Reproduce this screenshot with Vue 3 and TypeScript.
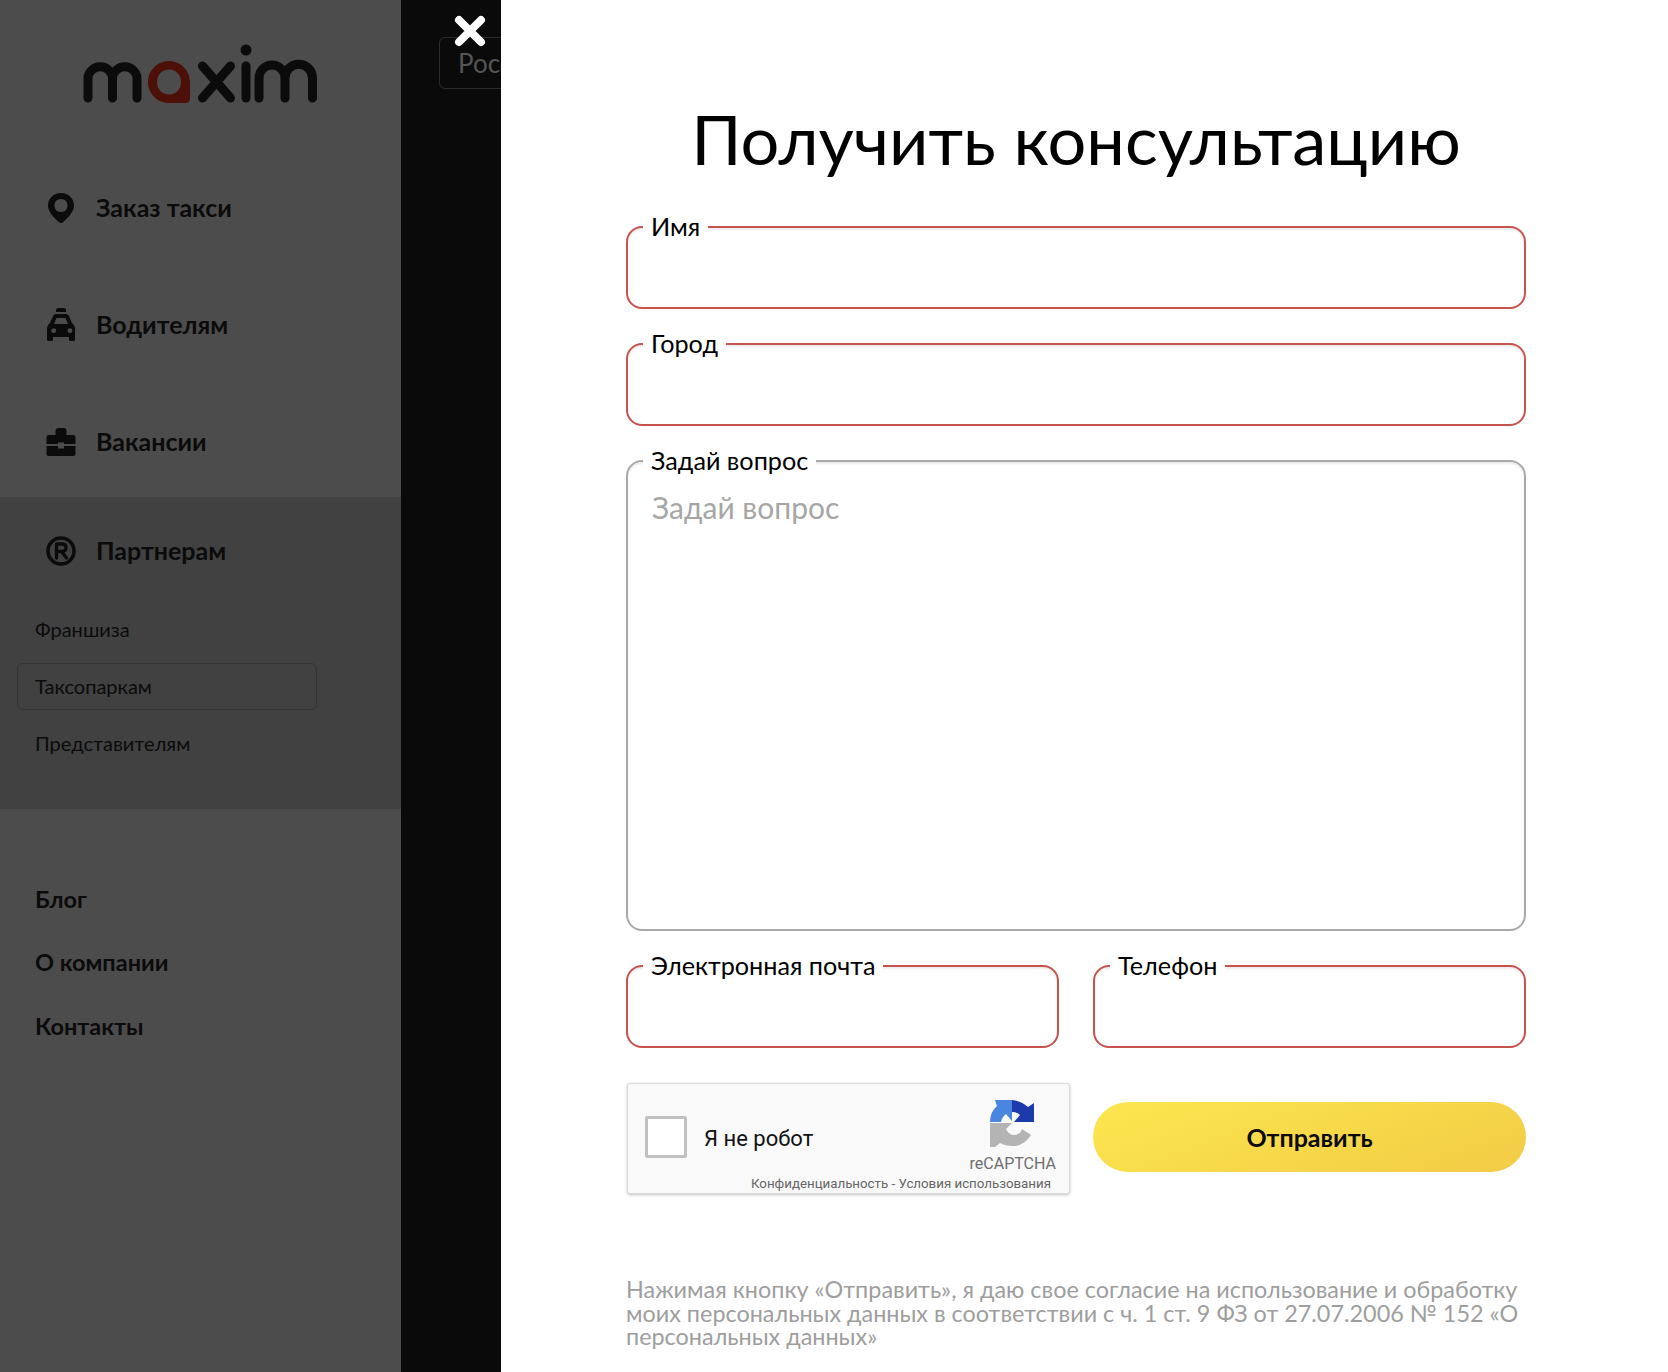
<script setup lang="ts">
const subLinks = [
  { label: 'Франшиза', active: false },
  { label: 'Таксопаркам', active: true },
  { label: 'Представителям', active: false },
]
const footerLinks = ['Блог', 'О компании', 'Контакты']
</script>

<template>
  <div class="page">
    <aside class="sidebar">
      <div class="logo-wrap">
        <svg class="logo" width="240" height="64" viewBox="80 42 240 64" fill="none" stroke="#0b0b0b" stroke-width="9" stroke-linecap="round" stroke-linejoin="round" aria-label="maxim">
          <path d="M88 98V78A12.300 12.300 0 0 1 112.500 78V98M112.500 78A12.300 12.300 0 0 1 137 78V98" />
          <path fill="#4d1008" fill-rule="evenodd" stroke="none" d="M169 61C180.500 61 190 70.500 190 82V98Q190 103 185 103H169C157.500 103 148 93.500 148 82C148 70.500 157.500 61 169 61ZM169 69.500C162 69.500 157 75 157 82C157 89 162 94.500 169 94.500C176 94.500 181 89 181 82C181 75 176 69.500 169 69.500Z" />
          <path d="M202.500 66L230.500 98M230.500 66L202.500 98" />
          <path d="M246 66V98" />
          <circle cx="246" cy="50" r="5.500" fill="#0b0b0b" stroke="none" />
          <path d="M259 98V78A13 13 0 0 1 285 78V98M285 78A13.750 13.750 0 0 1 312.500 78V98" />
        </svg>
      </div>

      <nav class="main-nav">
        <a class="nav-row">
          <svg class="nav-icon" viewBox="0 0 30 32" width="30" height="32">
            <path fill="#0b0b0b" fill-rule="evenodd" d="M15 1C7.500 1 2 6.500 2 13.500C2 20 9 27 13.500 30.500Q15 31.500 16.500 30.500C21 27 28 20 28 13.500C28 6.500 22.500 1 15 1ZM15 7C19 7 21.500 9.800 21.500 13.500C21.500 17.200 19 20 15 20C11 20 8.500 17.200 8.500 13.500C8.500 9.800 11 7 15 7Z" />
          </svg>
          <span>Заказ такси</span>
        </a>
        <a class="nav-row">
          <svg class="nav-icon" viewBox="0 0 30 36" width="30" height="36">
            <path fill="#0b0b0b" fill-rule="evenodd" d="M12 1H18Q20 1 20 3V5H10V3Q10 1 12 1ZM10 7H20Q22 7 23 9L26 16Q29 18 29 21V32.500Q29 34 27.500 34H24.500Q23 34 23 32.500V30H7V32.500Q7 34 5.500 34H2.500Q1 34 1 32.500V21Q1 18 4 16L7 9Q8 7 10 7ZM10.500 11L8 17H22L19.500 11ZM7.700 21.300A2.400 2.400 0 1 0 7.700 26.100A2.400 2.400 0 1 0 7.700 21.300ZM24 21.300A2.400 2.400 0 1 0 24 26.100A2.400 2.400 0 1 0 24 21.300Z" />
          </svg>
          <span>Водителям</span>
        </a>
        <a class="nav-row">
          <svg class="nav-icon" viewBox="0 0 30 30" width="30" height="30">
            <path fill="#0b0b0b" fill-rule="evenodd" d="M13 1H18Q20.500 1 20.500 4V8H27Q29.500 8 29.500 10.500V17H18V15.500H12V17H0.500V10.500Q0.500 8 3 8H9.500V4Q9.500 1 13 1Z M0.500 19H12V21.500H18V19H29.500V26.500Q29.500 29 27 29H3Q0.500 29 0.500 26.500Z" />
          </svg>
          <span>Вакансии</span>
        </a>
      </nav>

      <section class="partners">
        <a class="nav-row partner-head">
          <svg class="nav-icon" viewBox="0 0 30 30" width="30" height="30">
            <circle cx="15" cy="15" r="13" fill="none" stroke="#0b0b0b" stroke-width="3.500" />
            <path fill="none" stroke="#0b0b0b" stroke-width="3.300" stroke-linecap="round" stroke-linejoin="round" d="M10.500 22V8H16Q20 8 20 11.800Q20 15.500 16 15.500H10.500M15.500 15.500L20.500 22" />
          </svg>
          <span>Партнерам</span>
        </a>
        <ul class="sub-list">
          <li v-for="link in subLinks" :key="link.label" class="sub-item" :class="{ active: link.active }">{{ link.label }}</li>
        </ul>
      </section>

      <nav class="footer-nav">
        <a v-for="link in footerLinks" :key="link" class="footer-link">{{ link }}</a>
      </nav>
    </aside>

    <div class="backdrop">
      <div class="select-stub">Россия</div>
    </div>

    <svg class="close" width="32" height="32" viewBox="0 0 32 32" fill="none" stroke="#fff" stroke-width="8" stroke-linecap="round" aria-label="Закрыть">
      <path d="M5 5L27 27M27 5L5 27" />
    </svg>

    <main class="modal">
      <h1 class="title">Получить консультацию</h1>
      <form class="form" @submit.prevent>
        <div class="field invalid">
          <label class="legend"><span>Имя</span></label>
        </div>
        <div class="field invalid">
          <label class="legend"><span>Город</span></label>
        </div>
        <div class="field area">
          <label class="legend"><span>Задай вопрос</span></label>
          <div class="placeholder">Задай вопрос</div>
        </div>
        <div class="pair">
          <div class="field invalid">
            <label class="legend"><span>Электронная почта</span></label>
          </div>
          <div class="field invalid">
            <label class="legend"><span>Телефон</span></label>
          </div>
        </div>
        <div class="submit-row">
          <div class="captcha">
            <div class="check"></div>
            <div class="robot">Я не робот</div>
            <div class="brand">
              <svg width="45" height="47" viewBox="0 0 45 47">
                <path fill="#4a86e0" d="M5 0H22V21L16 14Q12 17 11 22H0Q0 12 7 6Z" />
                <path fill="#1c3aa9" d="M22 0Q32 1 38 7L44 3V22H24L30 15Q27 12 22 12Z" />
                <path fill="#b4b4b4" d="M0 23H22L16 29Q19 35 24 35Q30 35 32 29L41 35Q34 46 23 46Q15 46 10 43L5 47H0Z" />
              </svg>
              <div class="brand-name">reCAPTCHA</div>
            </div>
            <div class="terms">Конфиденциальность - Условия использования</div>
          </div>
          <button class="submit" type="submit">Отправить</button>
        </div>
      </form>
      <p class="legal">Нажимая кнопку «Отправить», я даю свое согласие на использование и обработку моих персональных данных в соответствии с ч. 1 ст. 9 ФЗ от 27.07.2006 № 152 «О персональных данных»</p>
    </main>
  </div>
</template>

<style scoped>
.page {
  position: relative;
  display: flex;
  width: 1668px;
  height: 1372px;
  overflow: hidden;
  font-family: Lato, "Open Sans", "Noto Sans", sans-serif;
  color: #0b0b0b;
  background: #fff;
}
.sidebar {
  flex: 0 0 401px;
  background: #4c4c4c;
  display: flex;
  flex-direction: column;
}
.logo-wrap {
  height: 155px;
  padding: 42px 0 0 80px;
  box-sizing: border-box;
}
.logo { display: block; }
.main-nav {
  display: flex;
  flex-direction: column;
  gap: 9px;
}
.nav-row {
  display: flex;
  align-items: center;
  height: 108px;
  box-sizing: border-box;
  font-size: 25px;
  font-weight: 700;
  position: relative;
  padding: 0 0 4px 96px;
}
.nav-icon {
  position: absolute;
  left: 46px;
  top: 50%;
  transform: translateY(calc(-50% - 1px));
}
.partners {
  background: #414141;
  height: 312px;
  box-sizing: border-box;
}
.partner-head { height: 109px; }
.sub-list {
  list-style: none;
  margin: 0;
  padding: 0 0 0 17px;
  display: flex;
  flex-direction: column;
  gap: 10px;
}
.sub-item {
  width: 300px;
  height: 47px;
  box-sizing: border-box;
  display: flex;
  align-items: center;
  padding: 0 0 2px 17px;
  font-size: 20px;
  border: 1px solid transparent;
  border-radius: 6px;
}
.sub-item.active { border-color: #343434; }
.footer-nav {
  display: flex;
  flex-direction: column;
  gap: 23.500px;
  padding: 69.500px 0 0 35px;
}
.footer-link {
  font-size: 23.500px;
  line-height: 40px;
  font-weight: 700;
}
.backdrop {
  flex: 0 0 100px;
  background: #0a0a0a;
  overflow: hidden;
  padding: 37px 0 0 38px;
  box-sizing: border-box;
}
.select-stub {
  width: 160px;
  height: 52px;
  box-sizing: border-box;
  border: 1px solid #2c2c2c;
  border-radius: 6px;
  padding-left: 18px;
  color: #555;
  font-size: 26px;
  line-height: 50px;
  white-space: nowrap;
}
.close {
  position: absolute;
  left: 454px;
  top: 15px;
}
.modal {
  flex: 1;
  padding: 0 142px 0 125px;
  box-sizing: border-box;
  background: #fff;
}
.title {
  margin: 0;
  padding-top: 96px;
  height: 226px;
  box-sizing: border-box;
  text-align: center;
  font-size: 68.500px;
  line-height: 86px;
  font-weight: 400;
  color: #000;
  white-space: nowrap;
}
.form {
  display: flex;
  flex-direction: column;
  gap: 34px;
}
.field {
  position: relative;
  height: 83px;
  box-sizing: border-box;
  border: 2px solid #aaaaaa;
  border-radius: 16px;
  box-shadow: inset 0 2px 2px rgba(0, 0, 0, 0.08);
}
.field.invalid { border-color: #c8524e; }
.field.area { height: 471px; }
.legend {
  position: absolute;
  left: 15px;
  top: -17px;
  padding: 0 8px;
  background: #fff;
  font-size: 25.200px;
  line-height: 30px;
  color: #000;
}
.placeholder {
  padding: 27px 0 0 24px;
  font-size: 30px;
  line-height: 36px;
  color: #a6a6a6;
}
.pair {
  display: grid;
  grid-template-columns: 433px 433px;
  gap: 34px;
}
.submit-row {
  display: grid;
  grid-template-columns: 444px 433px;
  gap: 23px;
  align-items: start;
  margin-top: 1px;
}
.captcha {
  position: relative;
  height: 111px;
  margin-left: 1px;
  box-sizing: border-box;
  background: #f9f9f9;
  border: 1px solid #dadada;
  border-radius: 3px;
  box-shadow: 0 1px 3px rgba(0, 0, 0, 0.25);
  font-family: Roboto, sans-serif;
  display: flex;
  align-items: flex-start;
  padding: 32px 13px 0 17px;
}
.check {
  width: 42px;
  height: 42px;
  box-sizing: border-box;
  background: #fff;
  border: 3px solid #c1c1c1;
  border-radius: 2px;
  flex: none;
}
.robot {
  margin-left: 17px;
  font-size: 22px;
  line-height: 42px;
  color: #111;
  flex: 1;
  margin-top: 2px;
}
.brand {
  display: flex;
  flex-direction: column;
  align-items: center;
  margin-top: -16px;
}
.brand-name {
  font-size: 16px;
  line-height: 18px;
  color: #6f6f6f;
  margin-top: 8px;
}
.terms {
  position: absolute;
  right: 18px;
  bottom: 0;
  font-size: 13.300px;
  line-height: 18px;
  color: #666;
  white-space: nowrap;
}
.submit {
  height: 70px;
  margin-top: 19px;
  border: 0;
  border-radius: 36px;
  background: linear-gradient(160deg, #fce74f, #f2cb45);
  font-family: inherit;
  font-size: 25px;
  font-weight: 700;
  color: #0b0b0b;
}
.legal {
  margin: 84px 0 0;
  width: 900px;
  font-size: 23.400px;
  line-height: 23.500px;
  color: #9e9e9e;
}
</style>
